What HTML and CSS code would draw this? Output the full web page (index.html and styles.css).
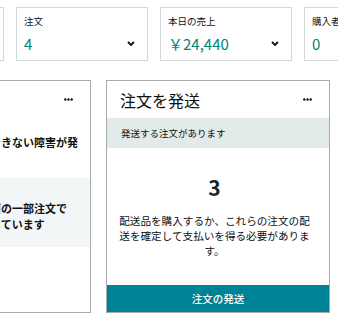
FILE: index.html
```html
<!DOCTYPE html>
<html lang="ja">
<head>
  <meta charset="UTF-8" />
  <meta name="viewport" content="width=device-width, initial-scale=1.0"/>
  <title>セラーセントラル | ホーム</title>
  <link rel="stylesheet" href="styles.css">
</head>
<body>

  <!-- Summary cards (scrolled row) -->
  <div class="stats">
    <div class="stat">
      <div class="stat-label">マーケットプレイス</div>
      <div class="stat-row">
        <span class="stat-value">日本</span>
        <svg class="chev" width="8" height="5" viewBox="0 0 8 5"><polyline points="1,1 4,4 7,1" /></svg>
      </div>
    </div>
    <div class="stat">
      <div class="stat-label">注文</div>
      <div class="stat-row">
        <span class="stat-value">4</span>
        <svg class="chev" width="8" height="5" viewBox="0 0 8 5"><polyline points="1,1 4,4 7,1" /></svg>
      </div>
    </div>
    <div class="stat">
      <div class="stat-label">本日の売上</div>
      <div class="stat-row">
        <span class="stat-value">￥24,440</span>
        <svg class="chev" width="8" height="5" viewBox="0 0 8 5"><polyline points="1,1 4,4 7,1" /></svg>
      </div>
    </div>
    <div class="stat">
      <div class="stat-label">購入者からのメッセージ</div>
      <div class="stat-row">
        <span class="stat-value">0</span>
        <svg class="chev" width="8" height="5" viewBox="0 0 8 5"><polyline points="1,1 4,4 7,1" /></svg>
      </div>
    </div>
  </div>

  <!-- Panels -->
  <div class="panels">
    <div class="panel">
      <div class="panel-head">
        <h2>お知らせ</h2>
        <svg class="more" width="9" height="3" viewBox="0 0 9 3"><circle cx="1.3" cy="1.5" r="1.2"/><circle cx="4.5" cy="1.5" r="1.2"/><circle cx="7.7" cy="1.5" r="1.2"/></svg>
      </div>
      <div class="notice">一部の出品者様が出品できない障害が発生しています。</div>
      <div class="notice notice-alt">配送遅延のため管理画面の一部注文でエラーが断続的に発生しています</div>
    </div>

    <div class="panel">
      <div class="panel-head">
        <h2>注文を発送</h2>
        <svg class="more" width="9" height="3" viewBox="0 0 9 3"><circle cx="1.3" cy="1.5" r="1.2"/><circle cx="4.5" cy="1.5" r="1.2"/><circle cx="7.7" cy="1.5" r="1.2"/></svg>
      </div>
      <div class="panel-band">発送する注文があります</div>
      <div class="panel-body">
        <div class="big-count">3</div>
        <p>配送品を購入するか、これらの注文の配送を確定して支払いを得る必要があります。</p>
      </div>
      <button class="panel-btn">注文の発送</button>
    </div>
  </div>

</body>
</html>
```

FILE: styles.css
```css
* {
  box-sizing: border-box;
  margin: 0;
  padding: 0;
  font-family: "Noto Sans CJK JP", "Noto Sans", sans-serif;
}

body {
  background: #ffffff;
  color: #0f1111;
  padding-top: 7px;
  overflow: hidden;
}

/* summary cards */
.stats {
  display: flex;
  gap: 12px;
  margin-left: -128px;
}

.stat {
  flex: 0 0 132px;
  height: 54px;
  border: 1px solid #d5d9d9;
  padding: 0 10px 0 7px;
  overflow: hidden;
}

.stat-label {
  font-size: 9.5px;
  line-height: 13px;
  margin-top: 7px;
  white-space: nowrap;
}

.stat-row {
  display: flex;
  justify-content: space-between;
  align-items: center;
  margin-top: 4px;
  height: 22px;
}

.stat-value {
  font-size: 15px;
  color: #008577;
  white-space: nowrap;
}

.chev {
  fill: none;
  stroke: #0f1111;
  stroke-width: 1.8;
  margin-right: 2px;
}

/* panels */
.panels {
  display: flex;
  gap: 15px;
  margin-left: -133px;
  margin-top: 19px;
}

.panel {
  flex: 0 0 224px;
  height: 233px;
  border: 1px solid #a6abab;
  display: flex;
  flex-direction: column;
}

.panel-head {
  height: 37px;
  display: flex;
  justify-content: space-between;
  align-items: center;
  padding: 0 17px 0 13px;
}

.panel-head h2 {
  font-size: 16px;
  font-weight: 400;
  color: #0f1111;
}

.more {
  fill: #0f1111;
}

.notice {
  font-size: 11px;
  font-weight: 700;
  line-height: 16px;
  padding: 16px 12px 12px 12px;
}

.notice-alt {
  background: #f3f6f6;
  padding: 22px 22px 15px 12px;
}

.panel-band {
  height: 30px;
  background: #e3eaea;
  font-size: 9.5px;
  line-height: 30px;
  padding-left: 14px;
}

.panel-body {
  flex: 1;
  text-align: center;
  padding: 26px 17px 0 10px;
}

.big-count {
  font-size: 21px;
  font-weight: 700;
  line-height: 26px;
  color: #16262a;
}

.panel-body p {
  font-size: 10.6px;
  line-height: 15px;
  margin-top: 13px;
}

.panel-btn {
  height: 27px;
  border: none;
  background: #008296;
  color: #ffffff;
  font-size: 10.5px;
  font-weight: 500;
  cursor: pointer;
}
```
